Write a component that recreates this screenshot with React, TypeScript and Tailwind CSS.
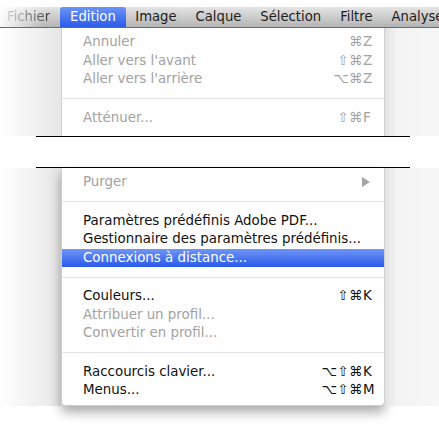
import React from "react";

type Item =
  | { type: "sep" }
  | {
      type: "item";
      label: string;
      mods?: string;
      keyc?: string;
      disabled?: boolean;
      selected?: boolean;
      submenu?: boolean;
    };

const part1: Item[] = [
  { type: "item", label: "Annuler", mods: "⌘", keyc: "Z", disabled: true },
  { type: "item", label: "Aller vers l'avant", mods: "⇧⌘", keyc: "Z", disabled: true },
  { type: "item", label: "Aller vers l'arrière", mods: "⌥⌘", keyc: "Z", disabled: true },
  { type: "sep" },
  { type: "item", label: "Atténuer...", mods: "⇧⌘", keyc: "F", disabled: true },
];

const part2: Item[] = [
  { type: "item", label: "Purger", disabled: true, submenu: true },
  { type: "sep" },
  { type: "item", label: "Paramètres prédéfinis Adobe PDF..." },
  { type: "item", label: "Gestionnaire des paramètres prédéfinis..." },
  { type: "item", label: "Connexions à distance...", selected: true },
  { type: "sep" },
  { type: "item", label: "Couleurs...", mods: "⇧⌘", keyc: "K" },
  { type: "item", label: "Attribuer un profil...", disabled: true },
  { type: "item", label: "Convertir en profil...", disabled: true },
  { type: "sep" },
  { type: "item", label: "Raccourcis clavier...", mods: "⌥⇧⌘", keyc: "K" },
  { type: "item", label: "Menus...", mods: "⌥⇧⌘", keyc: "M" },
];

function Row({ item }: { item: Item }) {
  if (item.type === "sep") {
    return (
      <div className="h-[20px] flex items-center">
        <div className="h-px w-full bg-[#e2e2e2]" />
      </div>
    );
  }
  const color = item.selected
    ? "text-white bg-[linear-gradient(to_bottom,#6f95f6,#2a5ae9)]"
    : item.disabled
    ? "text-[#a2a2a2]"
    : "text-[#111111]";
  return (
    <div className={`flex items-center h-[18.5px] pl-[21px] pr-[10px] ${color}`}>
      <span className="flex-1 whitespace-nowrap">{item.label}</span>
      {item.mods && (
        <span className="flex items-center">
          <span className="tracking-[0.5px]">{item.mods}</span>
          <span className="w-[11px] text-left">{item.keyc}</span>
        </span>
      )}
      {item.submenu && (
        <svg width="8" height="10" viewBox="0 0 8 10" className="mr-[4px]">
          <path d="M0 0 L8 5 L0 10 Z" fill="#a5a5a5" />
        </svg>
      )}
    </div>
  );
}

const menuFont = { fontFamily: '"DejaVu Sans", "Liberation Sans", sans-serif' };

export default function App() {
  const bar = ["Fichier", "Edition", "Image", "Calque", "Sélection", "Filtre", "Analyse"];
  return (
    <div className="w-[439px] h-[446px] overflow-hidden bg-white" style={menuFont}>
      <div className="h-[7px] bg-white" />
      {/* menu bar */}
      <div className="h-[21px] flex items-stretch text-[13.2px] text-[#1c1c1c] whitespace-nowrap border-b border-[#6b6b6b] bg-[linear-gradient(to_right,rgba(255,255,255,0.95),rgba(255,255,255,0)_45px),linear-gradient(to_bottom,#e4e4e4,#b4b4b4)]">
        {bar.map((b, i) => (
          <div
            key={b}
            className={
              i === 1
                ? "flex items-center px-[10px] text-white rounded-t-[3px] bg-[linear-gradient(to_bottom,#6a94f7,#2b5be8)]"
                : i === 0
                ? "flex items-center pl-[7px] pr-[10px]"
                : "flex items-center px-[9.5px]"
            }
          >
            {i === 0 ? (
              <span className="bg-[linear-gradient(to_right,#cfcfcf,#3a3a3a)] bg-clip-text text-transparent">
                {b}
              </span>
            ) : (
              b
            )}
          </div>
        ))}
      </div>
      {/* part 1 */}
      <div className="flex h-[108px]">
        <div className="w-[61px] bg-[linear-gradient(to_right,#ffffff,#e6e6e6)]" />
        <div className="w-[324px] bg-[#fefefe] pt-[5px] text-[13.4px] border-l border-r border-[#cfcfcf]">
          {part1.map((it, i) => (
            <Row key={i} item={it} />
          ))}
        </div>
        <div className="flex-1 bg-[linear-gradient(to_right,#e2e2e2,#f3f3f3_12px,#f7f7f7)]" />
      </div>
      {/* cut */}
      <div className="ml-[36px] w-[374px] h-px bg-black" />
      <div className="h-[30px] bg-white" />
      <div className="ml-[36px] w-[374px] h-px bg-black" />
      {/* part 2 */}
      <div className="flex">
        <div className="w-[61px] bg-[linear-gradient(to_right,#ffffff,#e6e6e6)]" />
        <div className="w-[324px] bg-[#fefefe] pt-[5px] pb-[5px] text-[13.4px] border-l border-r border-b border-[#cfcfcf] rounded-b-[5px] shadow-[0_6px_12px_rgba(0,0,0,0.35)]">
          {part2.map((it, i) => (
            <Row key={i} item={it} />
          ))}
        </div>
        <div className="flex-1 bg-[linear-gradient(to_right,#e2e2e2,#f3f3f3_12px,#f7f7f7)]" />
      </div>
    </div>
  );
}
